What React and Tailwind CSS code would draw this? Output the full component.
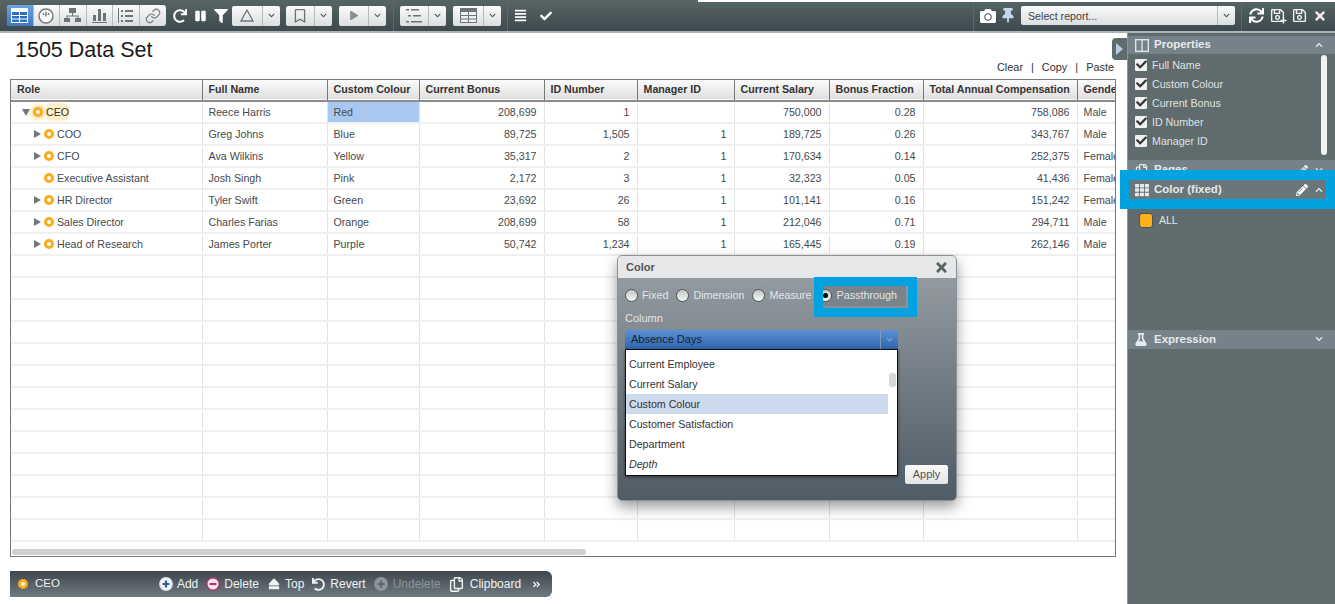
import * as React from "react";
import { Link as LinkIcon } from "lucide-react";
import {
  FaAlignJustify,
  FaAngleDoubleRight,
  FaCamera,
  FaCheck,
  FaChevronDown,
  FaChevronUp,
  FaEject,
  FaFilter,
  FaFlask,
  FaPause,
  FaPencilAlt,
  FaPlay,
  FaPlus,
  FaRedo,
  FaRegBookmark,
  FaRegCopy,
  FaRegSave,
  FaSync,
  FaTh,
  FaThumbtack,
  FaTimes,
  FaUndo,
} from "react-icons/fa";

const columns = [
  ["Role", "w-[191px]"],
  ["Full Name", "w-[125px]"],
  ["Custom Colour", "w-[92px]"],
  ["Current Bonus", "w-[125px]"],
  ["ID Number", "w-[93px]"],
  ["Manager ID", "w-[97px]"],
  ["Current Salary", "w-[95px]"],
  ["Bonus Fraction", "w-[94px]"],
  ["Total Annual Compensation", "w-[154px]"],
  ["Gender", "w-[39px]"],
];

const rows = [
  ["CEO", "Reece Harris", "Red", "208,699", "1", "", "750,000", "0.28", "758,086", "Male"],
  ["COO", "Greg Johns", "Blue", "89,725", "1,505", "1", "189,725", "0.26", "343,767", "Male"],
  ["CFO", "Ava Wilkins", "Yellow", "35,317", "2", "1", "170,634", "0.14", "252,375", "Female"],
  ["Executive Assistant", "Josh Singh", "Pink", "2,172", "3", "1", "32,323", "0.05", "41,436", "Female"],
  ["HR Director", "Tyler Swift", "Green", "23,692", "26", "1", "101,141", "0.16", "151,242", "Female"],
  ["Sales Director", "Charles Farias", "Orange", "208,699", "58", "1", "212,046", "0.71", "294,711", "Male"],
  ["Head of Research", "James Porter", "Purple", "50,742", "1,234", "1", "165,445", "0.19", "262,146", "Male"],
];

const emptyRows = Array.from({ length: 13 }, (_, i) => i);
const properties = ["Full Name", "Custom Colour", "Current Bonus", "ID Number", "Manager ID"];
const columnOptions = ["Current Employee", "Current Salary", "Custom Colour", "Customer Satisfaction", "Department", "Depth"];

function Node({ glow }) {
  return (
    <span
      className={
        "inline-block w-[10px] h-[10px] rounded-full border-[3px] border-[#fbac1b] bg-white shrink-0 " +
        (glow ? "shadow-[0_0_4px_2px_#fbd98d]" : "")
      }
    />
  );
}

function ToolIcon({ children, active, last }) {
  return (
    <div
      className={
        "w-[26.5px] h-full flex items-center justify-center " +
        (active ? "bg-gradient-to-b from-[#6ea3df] to-[#3b78c4] rounded-l-[3px] " : "") +
        (last ? "" : "border-r border-[#b5b9ba]")
      }
    >
      {children}
    </div>
  );
}

function SplitButton({ children, width }) {
  return (
    <div className={"h-[20px] flex rounded-[2px] bg-gradient-to-b from-[#fafafa] to-[#dcdedf] " + width}>
      <div className="flex-1 flex items-center justify-center border-r border-[#b5b9ba]">{children}</div>
      <div className="w-[17px] flex items-center justify-center">
        <FaChevronDown className="text-[#47555a] w-[7px] h-[7px]" />
      </div>
    </div>
  );
}

function TableGlyph({ dark }) {
  const line = dark ? "#ffffff" : "#6d7478";
  return (
    <svg width="17" height="15" viewBox="0 0 17 15">
      <rect x="0.5" y="0.5" width="16" height="14" fill={dark ? "#2f6fc0" : "#f0f0f0"} stroke={line} />
      <rect x="1" y="1" width="15" height="3" fill={line} />
      <path d="M1 7.5H16M1 11H16M8.5 4V14" stroke={line} />
    </svg>
  );
}

function PanelHeader({ icon, title, actions, height, color }) {
  return (
    <div className={"flex items-center pl-[7px] pr-[12px] text-[#e6eaea] shrink-0 " + height + " " + color}>
      <span className="w-[19px] flex items-center">{icon}</span>
      <span className="font-bold text-[11.5px]">{title}</span>
      <span className="ml-auto flex items-center gap-[7px]">{actions}</span>
    </div>
  );
}

function Radio({ label, checked }) {
  return (
    <div className="flex items-center gap-[4px]">
      <span className="w-[13px] h-[13px] rounded-full bg-gradient-to-b from-[#c4c7c8] to-[#f7f7f7] border border-[#4e565b] flex items-center justify-center shrink-0">
        {checked && <span className="w-[5px] h-[5px] rounded-full bg-black" />}
      </span>
      <span className="text-[#e3e6e8] text-[10.8px]">{label}</span>
    </div>
  );
}

function BarAction({ icon, label, muted, gap }) {
  return (
    <div className={"flex items-center text-[12px] " + (gap || "gap-[4px] ") + (muted ? " text-[#8b959a]" : " text-[#f0f2f2]")}>
      {icon}
      <span>{label}</span>
    </div>
  );
}

function RoundBadge({ ring, fill, mark, kind }) {
  return (
    <svg width="14" height="14" viewBox="0 0 14 14">
      <circle cx="7" cy="7" r="6.2" fill={fill} stroke={ring} strokeWidth="1.4" />
      <path d={kind === "plus" ? "M7 3.6V10.4M3.6 7H10.4" : "M3.6 7H10.4"} stroke={mark} strokeWidth="2.2" />
    </svg>
  );
}

export default function App() {
  return (
    <div className="relative w-[1335px] h-[604px] overflow-hidden bg-white flex flex-col font-['Liberation_Sans',Arial,sans-serif] text-[10.67px] text-[#454a4c]">
      {/* top toolbar */}
      <div className="h-[33px] shrink-0 flex items-center pl-[7px] bg-gradient-to-b from-[#566564] to-[#3e4a4e] border-b-2 border-[#a9b4b3]">
        <div className="flex h-[21px] w-[159px] rounded-[3px] bg-gradient-to-b from-[#fafafa] to-[#dcdedf]">
          <ToolIcon active><TableGlyph dark /></ToolIcon>
          <ToolIcon>
            <svg width="16" height="16" viewBox="0 0 16 16">
              <circle cx="8" cy="8" r="7" fill="#fff" stroke="#6d7478" strokeWidth="1.4" />
              <path d="M8 3.5V8.5M5 5L6 7M11 5L10 7" stroke="#6d7478" strokeWidth="1.4" />
            </svg>
          </ToolIcon>
          <ToolIcon>
            <svg width="17" height="15" viewBox="0 0 17 15" fill="#6d7478">
              <rect x="5" y="0" width="7" height="5" />
              <rect x="0" y="10" width="6" height="4" />
              <rect x="11" y="10" width="6" height="4" />
              <path d="M8 5H9V7.5H14.5V10H13.5V8.5H3.5V10H2.5V7.5H8Z" />
            </svg>
          </ToolIcon>
          <ToolIcon>
            <svg width="15" height="15" viewBox="0 0 15 15" fill="#6d7478">
              <rect x="1" y="7" width="3" height="6" />
              <rect x="6" y="1" width="3" height="12" />
              <rect x="11" y="5" width="3" height="8" />
              <rect x="0" y="14" width="15" height="1" />
            </svg>
          </ToolIcon>
          <ToolIcon>
            <svg width="15" height="15" viewBox="0 0 15 15" fill="#6d7478">
              <rect x="0" y="0" width="1" height="15" />
              <rect x="3" y="2" width="2" height="2" />
              <rect x="3" y="7" width="2" height="2" />
              <rect x="3" y="12" width="2" height="2" />
              <rect x="7" y="2" width="8" height="2" />
              <rect x="7" y="7" width="8" height="2" />
              <rect x="7" y="12" width="8" height="2" />
            </svg>
          </ToolIcon>
          <ToolIcon last><LinkIcon size={16} strokeWidth={1.6} className="text-[#6d7478]" /></ToolIcon>
        </div>
        <FaRedo className="ml-[7px] text-white w-[14px] h-[14px]" />
        <FaPause className="ml-[8px] text-white w-[11px] h-[12px]" />
        <FaFilter className="ml-[7px] text-white w-[16px] h-[14px]" />
        <div className="ml-[3px]">
          <SplitButton width="w-[48px]">
            <svg width="14" height="13" viewBox="0 0 14 13">
              <path d="M7 1L13 12H1Z" fill="none" stroke="#6d7478" strokeWidth="1.3" />
            </svg>
          </SplitButton>
        </div>
        <div className="ml-[6px]">
          <SplitButton width="w-[46px]"><FaRegBookmark className="text-[#6d7478] w-[12px] h-[14px]" /></SplitButton>
        </div>
        <div className="ml-[7px]">
          <SplitButton width="w-[47px]"><FaPlay className="text-[#8a9092] w-[8px] h-[9px]" /></SplitButton>
        </div>
        <div className="ml-[7px] h-full border-l border-[#5d6969]" />
        <div className="ml-[6px]">
          <SplitButton width="w-[46px]">
            <svg width="18" height="14" viewBox="0 0 18 14" fill="#6d7478">
              <rect x="1" y="0" width="3" height="1.5" />
              <rect x="6" y="0" width="8" height="1.5" />
              <rect x="3" y="6" width="3" height="1.5" />
              <rect x="8" y="6" width="8" height="1.5" />
              <rect x="1" y="12" width="3" height="1.5" />
              <rect x="6" y="12" width="11" height="1.5" />
            </svg>
          </SplitButton>
        </div>
        <div className="ml-[7px]">
          <SplitButton width="w-[48px]"><TableGlyph /></SplitButton>
        </div>
        <div className="ml-[6px] h-full border-l border-[#5d6969]" />
        <FaAlignJustify className="ml-[6px] text-white w-[13px] h-[13px]" />
        <FaCheck className="ml-[13px] text-white w-[12px] h-[12px]" />
        <div className="ml-auto h-full border-l border-[#5d6969]" />
        <FaCamera className="ml-[5px] text-white w-[18px] h-[16px]" />
        <FaThumbtack className="ml-[5px] text-[#c6d3e8] w-[12px] h-[15px]" />
        <div className="ml-[7px] w-[214px] h-[19px] flex rounded-[2px] bg-gradient-to-b from-[#fafafa] to-[#dcdedf]">
          <div className="flex-1 flex items-center pl-[7px] text-[10.67px] text-[#444] border-r border-[#b5b9ba]">Select report...</div>
          <div className="w-[17px] flex items-center justify-center">
            <FaChevronDown className="text-[#47555a] w-[7px] h-[7px]" />
          </div>
        </div>
        <div className="ml-[6px] h-full border-l border-[#5d6969]" />
        <FaSync className="ml-[7px] text-white w-[15px] h-[15px]" />
        <div className="relative ml-[6px]">
          <FaRegSave className="text-[#eef0f0] w-[15px] h-[15px]" />
          <FaPlus className="absolute -right-[2px] -bottom-[1px] text-[#eef0f0] w-[7px] h-[7px]" />
        </div>
        <FaRegSave className="ml-[7px] text-[#eef0f0] w-[15px] h-[15px]" />
        <FaTimes className="ml-[6px] text-[#f2e6ee] w-[14px] h-[14px]" />
        <div className="w-[8px]" />
      </div>
      <div className="absolute left-[698px] right-0 top-0 h-[2px] bg-white" />

      <div className="flex-1 flex min-h-0">
        {/* main content */}
        <div className="w-[1127px] shrink-0 pl-[10px] pr-[11px] flex flex-col">
          <div className="flex items-start">
            <div className="pl-[5px] pt-[4px] text-[21.5px] leading-[26px] text-[#1c1c1c]">1505 Data Set</div>
            <div className="ml-auto mt-[5px] -mr-[11px] w-[15px] h-[22px] bg-[#5f6b6c] rounded-l-[4px] flex items-center justify-center">
              <span className="w-0 h-0 border-y-[6px] border-y-transparent border-l-[7px] border-l-[#b9cbe0]" />
            </div>
          </div>
          <div className="flex justify-end pr-[2px] gap-[8px] text-[10.9px] leading-[13px] text-[#333] -mt-[2px]">
            <span>Clear</span>
            <span>|</span>
            <span>Copy</span>
            <span>|</span>
            <span>Paste</span>
          </div>
          <div className="mt-[5px] h-[478px] border border-[#77797a] flex flex-col overflow-hidden">
            <div className="flex-1 overflow-hidden">
              <table className="table-fixed w-[1105px] border-collapse">
                <thead>
                  <tr className="h-[21px] bg-gradient-to-b from-[#fbfbfb] to-[#dfdfdf] border-b-2 border-[#8a8c8d]">
                    {columns.map(([name, width]) => (
                      <th
                        key={name}
                        className={"p-0 pl-[6px] pb-[2px] text-left text-[10.67px] font-bold text-[#333] overflow-hidden whitespace-nowrap border-r border-[#77797a] last:border-r-0 " + width}
                      >
                        {name}
                      </th>
                    ))}
                  </tr>
                </thead>
                <tbody>
                  {rows.map((row, i) => (
                    <tr key={row[0]} className="h-[22px] border-b-2 border-[#f0f0f0]">
                      {row.map((cell, c) => {
                        const isRight = c >= 3 && c <= 8;
                        let bg = "";
                        if (i === 0 && c === 2) bg = "bg-[#a9c8f0] ";
                        if (c === 0) {
                          const leaf = row[0] === "Executive Assistant";
                          return (
                            <td key={c} className="p-0 border-r border-[#e4e4e4]">
                              <div className={"flex items-center gap-[3px] " + (i === 0 ? "pl-[11px]" : "pl-[23px]")}>
                                {i === 0 ? (
                                  <span className="w-0 h-0 border-x-[4px] border-x-transparent border-t-[7px] border-t-[#70777a]" />
                                ) : leaf ? (
                                  <span className="w-[7px]" />
                                ) : (
                                  <span className="w-0 h-0 border-y-[4px] border-y-transparent border-l-[7px] border-l-[#70777a]" />
                                )}
                                <Node glow={i === 0} />
                                <span className={"whitespace-nowrap " + (i === 0 ? "bg-[#fdeec9] shadow-[0_0_3px_1px_#fdeec9] rounded-[6px] text-[#333]" : "")}>{cell}</span>
                              </div>
                            </td>
                          );
                        }
                        return (
                          <td
                            key={c}
                            className={bg + "p-0 overflow-hidden whitespace-nowrap border-r border-[#e4e4e4] last:border-r-0 " + (isRight ? "text-right pr-[7px]" : "pl-[6px]")}
                          >
                            {cell}
                          </td>
                        );
                      })}
                    </tr>
                  ))}
                  {emptyRows.map((r) => (
                    <tr key={r} className="h-[22px] border-b-2 border-[#f0f0f0]">
                      {columns.map(([name]) => (
                        <td key={name} className="p-0 border-r border-[#e4e4e4] last:border-r-0" />
                      ))}
                    </tr>
                  ))}
                </tbody>
              </table>
            </div>
            <div className="h-[9px] shrink-0 flex items-center">
              <div className="ml-[1px] w-[574px] h-[6px] rounded-full bg-[#cfcfcf]" />
            </div>
          </div>

          {/* node action bar */}
          <div className="mt-[14px] w-[542px] h-[26px] flex items-center pl-[8px] rounded-r-[6px] bg-gradient-to-b from-[#3f474e] to-[#6f7a80] text-[#eef0f0]">
            <Node />
            <span className="ml-[7px] text-[11.5px]">CEO</span>
            <div className="ml-[99px] flex items-center gap-[8px]">
              <BarAction icon={<RoundBadge kind="plus" ring="#dfe8f2" fill="#f4f6fa" mark="#2f5f9e" />} label="Add" />
              <BarAction icon={<RoundBadge kind="minus" ring="#a8366f" fill="#f6e6ee" mark="#a8366f" />} label="Delete" />
              <BarAction icon={<FaEject className="w-[14px] h-[12px]" />} label="Top" />
              <BarAction gap="gap-[5px]" icon={<FaUndo className="w-[13px] h-[13px]" />} label="Revert" />
              <BarAction muted gap="gap-[5px]" icon={<RoundBadge kind="plus" ring="#8b959a" fill="#8b959a" mark="#5f6a70" />} label="Undelete" />
              <BarAction gap="gap-[6px]" icon={<FaRegCopy className="w-[15px] h-[15px]" />} label="Clipboard" />
              <FaAngleDoubleRight className="ml-[3px] w-[9px] h-[9px]" />
            </div>
          </div>
        </div>

        {/* properties sidebar */}
        <div className="flex-1 bg-[#5f6b6c] flex flex-col pt-[3px] border-l border-[#8a9696]">
          <PanelHeader
            height="h-[18px]"
            color="bg-[#75828a]"
            icon={
              <svg width="14" height="13" viewBox="0 0 14 13" fill="none" stroke="#e6eaea" strokeWidth="1.3">
                <rect x="0.7" y="0.7" width="12.6" height="11.6" />
                <path d="M7 1V12" />
              </svg>
            }
            title="Properties"
            actions={<FaChevronUp className="w-[8px] h-[8px]" />}
          />
          <div className="h-[106px] relative overflow-hidden pl-[7px] pt-[1px] shrink-0">
            {properties.map((p) => (
              <div key={p} className="h-[19px] flex items-center gap-[5px] text-[#dfe3e3] text-[10.67px]">
                <span className="w-[12px] h-[12px] bg-[#f0f0f0] flex items-center justify-center rounded-[1px]">
                  <FaCheck className="text-[#333] w-[11px] h-[11px]" />
                </span>
                {p}
              </div>
            ))}
            <div className="absolute right-[8px] top-[1px] w-[6px] h-[100px] rounded-full bg-[#f2f3f3]" />
          </div>
          <PanelHeader
            height="h-[20px]"
            color="bg-[#75828a]"
            icon={<FaRegCopy className="w-[13px] h-[13px]" />}
            title="Pages"
            actions={
              <>
                <FaPencilAlt className="w-[11px] h-[11px]" />
                <FaChevronDown className="w-[8px] h-[8px]" />
              </>
            }
          />
          <PanelHeader
            height="h-[19px] pt-[1px]"
            color="bg-[#69777b]"
            icon={<FaTh className="w-[14px] h-[14px]" />}
            title="Color (fixed)"
            actions={
              <>
                <FaPencilAlt className="w-[12px] h-[12px] text-white" />
                <FaChevronUp className="w-[8px] h-[8px]" />
              </>
            }
          />
          <div className="flex items-center gap-[6px] pl-[11px] pt-[14px] text-[#e3e6e6] text-[10.5px]">
            <span className="w-[14px] h-[15px] rounded-[3px] bg-[#fbb117] border border-[#4a5254]" />
            ALL
          </div>
          <div className="mt-[101px]">
            <PanelHeader
              height="h-[19px]"
              color="bg-[#75828a]"
              icon={<FaFlask className="w-[12px] h-[13px]" />}
              title="Expression"
              actions={<FaChevronDown className="w-[8px] h-[8px]" />}
            />
          </div>
        </div>
      </div>

      {/* annotation round the Color header */}
      <div className="absolute left-[1120px] top-[170px] w-[215px] h-[39px] border-y-[10px] border-l-[9px] border-r-[9px] border-[#00a3e0]" />

      {/* Color dialog */}
      <div className="absolute left-[617px] top-[255px] w-[340px] h-[246px] rounded-[5px] bg-gradient-to-b from-[#9aa1a7] to-[#4f5b65] border border-[#8b9195] shadow-[0_6px_14px_rgba(0,0,0,0.4)] flex flex-col">
        <div className="h-[22px] shrink-0 bg-[#e6e7e8] rounded-t-[4px] flex items-center pl-[8px] pr-[7px] font-bold text-[11px] text-[#555]">
          Color
          <FaTimes className="ml-auto w-[15px] h-[15px] text-[#56625f]" />
        </div>
        <div className="flex items-center pl-[7px] pt-[7px] gap-[8px]">
          <Radio label="Fixed" />
          <Radio label="Dimension" />
          <Radio label="Measure" />
          <div className="bg-[#78838b] h-[21px] w-[87px] flex items-center">
            <Radio label="Passthrough" checked />
          </div>
        </div>
        <div className="pl-[7px] mt-[5px] text-[#e3e6e8] text-[11px] leading-[14px]">Column</div>
        <div className="flex flex-1 pl-[7px] pt-[5px] pb-[16px] pr-[8px]">
          <div className="w-[273px]">
            <div className="h-[19px] flex bg-gradient-to-b from-[#5b90d2] to-[#2f65ad] text-[#14233a] text-[11px]">
              <div className="flex-1 flex items-center pl-[6px] pb-[1px] border-r border-[#7f99b8]">Absence Days</div>
              <div className="w-[17px] flex items-center justify-center">
                <FaChevronDown className="w-[7px] h-[7px] text-[#8aa3c4]" />
              </div>
            </div>
            <div className="relative h-[127px] bg-white border border-[#111] shadow-[0_1px_3px_rgba(0,0,0,0.5)] pt-[4px] text-[#333]">
              {columnOptions.map((o) => (
                <div
                  key={o}
                  className={
                    "h-[20px] w-[262px] flex items-center pl-[3px] " +
                    (o === "Custom Colour" ? "bg-[#cddaed] " : "") +
                    (o === "Depth" ? "italic" : "")
                  }
                >
                  {o}
                </div>
              ))}
              <div className="absolute left-[263px] top-[23px] w-[7px] h-[14px] rounded-[3px] bg-[#d5d7d8]" />
            </div>
          </div>
          <div className="ml-auto self-end w-[43px] h-[19px] rounded-[2px] bg-gradient-to-b from-[#fafafa] to-[#e4e4e4] flex items-center justify-center text-[#555] text-[11px]">
            Apply
          </div>
        </div>
        {/* annotation round Passthrough */}
        <div className="absolute left-[196px] top-[21px] w-[103px] h-[40px] border-[9px] border-[#00a3e0]" />
      </div>
    </div>
  );
}
